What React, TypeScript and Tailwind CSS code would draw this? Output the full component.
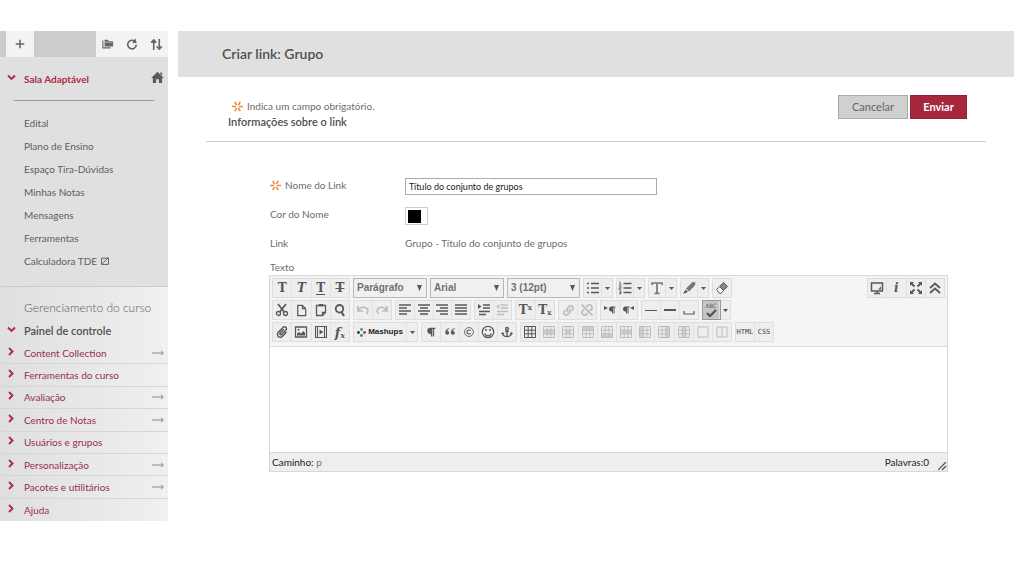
import type { ReactNode } from "react";
import {
  FaAnchor,
  FaLink,
  FaPaperclip,
  FaParagraph,
  FaUnlink,
} from "react-icons/fa";

const courseLinks = [
  "Edital",
  "Plano de Ensino",
  "Espaço Tira-Dúvidas",
  "Minhas Notas",
  "Mensagens",
  "Ferramentas",
  "Calculadora TDE",
];

const controlPanel: { label: string; arrow: boolean }[] = [
  { label: "Content Collection", arrow: true },
  { label: "Ferramentas do curso", arrow: false },
  { label: "Avaliação", arrow: true },
  { label: "Centro de Notas", arrow: true },
  { label: "Usuários e grupos", arrow: false },
  { label: "Personalização", arrow: true },
  { label: "Pacotes e utilitários", arrow: true },
  { label: "Ajuda", arrow: false },
];

function Icon({ children, size = 14 }: { children: ReactNode; size?: number }) {
  return (
    <svg
      width={size}
      height={size}
      viewBox="0 0 14 14"
      fill="none"
      stroke="currentColor"
      strokeWidth="1.3"
      aria-hidden="true"
    >
      {children}
    </svg>
  );
}

function Chevron({ down = false }: { down?: boolean }) {
  return (
    <svg className="mb-[3px]" width="9" height="9" viewBox="0 0 9 9" fill="none" stroke="#b02a45" strokeWidth="1.9" aria-hidden="true">
      <path d={down ? "M1 2.5 4.5 6 8 2.5" : "M3 1 6.5 4.5 3 8"} />
    </svg>
  );
}

function Asterisk() {
  return (
    <svg className="shrink-0" width="11" height="11" viewBox="0 0 11 11" stroke="#f0873f" strokeWidth="1.6" aria-hidden="true">
      <path d="M0 5.5H4M7 5.5H11M2.7 .8 4.7 4.2M8.3 .8 6.3 4.2M2.7 10.2 4.7 6.8M8.3 10.2 6.3 6.8" />
    </svg>
  );
}

function Group({ width, children }: { width: string; children: ReactNode }) {
  return (
    <div className={`flex h-5 shrink-0 divide-x divide-[#e2e2e2] border border-[#dedede] bg-[#eeeeee] ${width}`}>
      {children}
    </div>
  );
}

function Tool({
  label,
  children,
  dim = false,
  active = false,
}: {
  label: string;
  children: ReactNode;
  dim?: boolean;
  active?: boolean;
}) {
  return (
    <button
      type="button"
      aria-label={label}
      className={`flex min-w-0 flex-1 items-center justify-center ${dim ? "text-[#bdbdbd]" : "text-[#585858]"} ${active ? "bg-[#c6c6c6] outline outline-[#999999]" : ""}`}
    >
      {children}
    </button>
  );
}

function Caret({ label }: { label: string }) {
  return (
    <button type="button" aria-label={label} className="flex w-[10px] shrink-0 items-center justify-center">
      <svg width="5" height="3" viewBox="0 0 5 3" fill="#555555" aria-hidden="true">
        <path d="M0 0H5L2.5 3Z" />
      </svg>
    </button>
  );
}

function Picker({ label, value, width }: { label: string; value: string; width: string }) {
  return (
    <div className={`relative shrink-0 ${width}`}>
      <select
        aria-label={label}
        className="h-5 w-full appearance-none border border-[#b8b8b8] bg-[#f0f0f0] pl-[3px] font-['Liberation_Sans',Arial,sans-serif] text-[10px] font-bold text-[#707070]"
      >
        <option>{value}</option>
      </select>
      <svg className="pointer-events-none absolute top-[7px] right-[5px]" width="5" height="6" viewBox="0 0 5 6" fill="#555555" aria-hidden="true">
        <path d="M0 0H5L2.5 6Z" />
      </svg>
    </div>
  );
}

const glyph = "font-['DejaVu_Serif',serif] text-[12px] leading-none font-bold";

function Lines({ widths, right = false }: { widths: number[]; right?: boolean }) {
  return (
    <Icon>
      {widths.map((w, i) => (
        <path key={i} d={right ? `M${13 - w} ${2 + i * 3}H13` : `M1 ${2 + i * 3}h${w}`} strokeWidth="1.5" />
      ))}
    </Icon>
  );
}

function TableIcon({ shade }: { shade?: string }) {
  return (
    <Icon>
      <path d="M1.5 1.5h11v11h-11zM1.5 5.2h11M1.5 8.8h11M5.2 1.5v11M8.8 1.5v11" strokeWidth="1" />
      {shade && <path d={shade} fill="currentColor" fillOpacity=".6" stroke="none" />}
    </Icon>
  );
}

const tableTools = [
  { label: "Propriedades da linha", shade: "M1.5 4.5h11v5h-11z" },
  { label: "Propriedades da célula", shade: "M5 5h4v4h-4z" },
  { label: "Inserir linha acima", shade: "M1.5 1.5h11v4h-11z" },
  { label: "Inserir linha abaixo", shade: "M1.5 8.5h11v4h-11z" },
  { label: "Excluir linha", shade: "M1.5 5.5h11v3h-11z" },
  { label: "Inserir coluna antes", shade: "M1.5 1.5h4v11h-4z" },
  { label: "Inserir coluna depois", shade: "M8.5 1.5h4v11h-4z" },
  { label: "Excluir coluna", shade: "M5 1.5h4v11h-4z" },
];

function Sidebar() {
  return (
    <aside className="w-[168px] shrink-0 bg-[#e0e0e0] text-[10px] leading-4 text-[#5e5e5e]">
      <div className="flex h-[26px] justify-between bg-[#cccccc] pl-[6px] text-[#666666]">
        <button type="button" aria-label="Adicionar item" className="flex w-7 items-center justify-center bg-[#f3f3f3]">
          <Icon size={10}>
            <path d="M7 1v12M1 7h12" strokeWidth="2.2" />
          </Icon>
        </button>
        <div className="flex w-[72px] items-center justify-between bg-[#f3f3f3] pr-[5px] pl-[6px]">
          <button type="button" aria-label="Pastas">
            <Icon size={12}>
              <path d="M1 3v8.5h9" />
              <path d="M3 2h4l1 1.500h5v6.500h-10z" fill="currentColor" stroke="none" />
              <path d="M3 4.700h10" stroke="#f3f3f3" strokeWidth=".7" />
            </Icon>
          </button>
          <button type="button" aria-label="Atualizar">
            <Icon size={12}>
              <path d="M10.500 4A5 5 0 1 0 12 8" strokeWidth="1.900" />
              <path d="M7 5.500 12.500 6 11 .5Z" fill="currentColor" stroke="none" />
            </Icon>
          </button>
          <button type="button" aria-label="Reordenar">
            <Icon size={13}>
              <path d="M4 13V2M1.300 5 4 2 6.700 5M10 1v11M7.300 9 10 12 12.700 9" strokeWidth="1.700" />
            </Icon>
          </button>
        </div>
      </div>

      <div className="flex items-center px-1 pt-[14px] pl-[7px]">
        <Chevron down />
        <a href="#sala" className="ml-2 flex-1 font-bold text-[#ab2b43]">Sala Adaptável</a>
        <a href="#inicio" aria-label="Início" className="mb-[3px] text-[#5c5c5c]">
          <Icon size={13}>
            <path d="M7 .8 13.800 7.500H12V13H8.500V9H5.500V13H2V7.500H.2ZM10 1.500h2v3.500l-2-2z" fill="currentColor" stroke="none" />
          </Icon>
        </a>
      </div>
      <hr className="mt-[13px] mr-[14px] ml-[14px] border-[#999999]" />

      <nav aria-label="Menu do curso">
        <ul className="grid h-[186px] auto-rows-fr border-b border-[#cccccc] pt-[10px] pb-[13px] pl-6">
          {courseLinks.map((label) => (
            <li key={label} className="flex items-center">
              <a href="#curso" className="flex items-center gap-1">
                {label}
                {label === "Calculadora TDE" && (
                  <Icon size={8}>
                    <path d="M1 2h12v11h-12zM2 12 13 1" strokeWidth="1.700" />
                  </Icon>
                )}
              </a>
            </li>
          ))}
        </ul>
      </nav>

      <div className="bg-linear-to-r from-[#dfdfdf] to-[#f0f0f0]">
        <h2 className="pt-[13px] pl-6 text-[12px] font-light text-[#5c5c5c]">Gerenciamento do curso</h2>
        <div className="mt-[7px] flex items-center pl-[7px]">
          <Chevron down />
          <h3 className="ml-2 text-[11px] font-semibold text-[#505050]">Painel de controle</h3>
        </div>
        <ul className="mt-[3px] grid h-[179px] auto-rows-fr divide-y divide-[#d6d6d6] text-[#983048]">
          {controlPanel.map(({ label, arrow }) => (
            <li key={label} className="flex items-center pr-1 pl-[6px]">
              <Chevron />
              <a href="#painel" className="ml-[9px] flex-1">{label}</a>
              {arrow && (
                <svg width="12" height="6" viewBox="0 0 12 6" fill="none" stroke="#888888" aria-hidden="true">
                  <path d="M0 3H11M9 .8 11.300 3 9 5.200" />
                </svg>
              )}
            </li>
          ))}
        </ul>
      </div>
    </aside>
  );
}

function Toolbar() {
  return (
    <div className="flex justify-between border-b border-[#dddddd] bg-[#f5f5f5] px-[2px] pt-[2px] pb-1">
      <div className="flex flex-col gap-[2px]">
        <div className="flex gap-[3px]">
          <Group width="w-[78px]">
            <Tool label="Negrito"><span className={glyph}>T</span></Tool>
            <Tool label="Itálico"><span className={`${glyph} italic`}>T</span></Tool>
            <Tool label="Sublinhado"><span className={`${glyph} border-b border-[#505050]`}>T</span></Tool>
            <Tool label="Tachado"><span className={`${glyph} line-through`}>T</span></Tool>
          </Group>
          <Picker label="Formato" value="Parágrafo" width="w-[74px]" />
          <Picker label="Fonte" value="Arial" width="w-[74px]" />
          <Picker label="Tamanho" value="3 (12pt)" width="w-[73px]" />
          <Group width="w-[30px]">
            <Tool label="Lista com marcadores">
              <Icon><path d="M1 2.500h2M1 7h2M1 11.500h2M5 2.500h8M5 7h8M5 11.500h8" strokeWidth="1.600" /></Icon>
            </Tool>
            <Caret label="Opções de marcadores" />
          </Group>
          <Group width="w-[29px]">
            <Tool label="Lista numerada">
              <Icon>
                <path d="M5.500 2.500h8M5.500 7h8M5.500 11.500h8" strokeWidth="1.600" />
                <path d="M1 1h1.200v3M.8 4h2.800M1 5.700h2v1.300h-2v1.300h2.500M1 10h2v3h-2M1.300 11.500h1.700" strokeWidth=".8" />
              </Icon>
            </Tool>
            <Caret label="Opções de numeração" />
          </Group>
          <Group width="w-[29px]">
            <Tool label="Cor do texto">
              <Icon><path d="M2 4V2h10v2M7 2v10M4.500 12.300h5" strokeWidth="1.700" stroke="#777777" /></Icon>
            </Tool>
            <Caret label="Opções de cor" />
          </Group>
          <Group width="w-[29px]">
            <Tool label="Realce">
              <Icon>
                <path d="M4 7.500 9 2.500C10.500 1 12.500.8 13.200 1.500S13 4.500 11.500 6L7 10.500Z" fill="#777777" stroke="none" />
                <path d="M3.500 8.500 6 11 1 13Z" fill="currentColor" stroke="none" />
              </Icon>
            </Tool>
            <Caret label="Opções de realce" />
          </Group>
          <Group width="w-[20px]">
            <Tool label="Remover formatação">
              <Icon>
                <path d="M8.500 1.500 12.500 5.500 8.500 9.500 4.500 5.500Z" fill="#888888" strokeWidth="1" />
                <path d="M4.500 5.500 1.500 8.500 4.500 12.500H6L8.500 9.500" strokeWidth="1" />
              </Icon>
            </Tool>
          </Group>
        </div>

        <div className="flex gap-[3px]">
          <Group width="w-[78px]">
            <Tool label="Recortar">
              <Icon>
                <circle cx="3.500" cy="10.500" r="2" />
                <circle cx="10.500" cy="10.500" r="2" />
                <path d="M3 1 9.300 9M11 1 4.700 9" strokeWidth="1.700" />
              </Icon>
            </Tool>
            <Tool label="Copiar"><Icon size={13}><path d="M3 1.500h5l3.500 3.500v7.500h-8.500zM8 1.500v3.500h3.500" /></Icon></Tool>
            <Tool label="Colar">
              <Icon>
                <path d="M4.500 2.500h-2v10h6l3-3v-7h-2M8.500 12.500v-3h3" />
                <path d="M4.500 1h5v2.500h-5z" fill="currentColor" stroke="none" />
              </Icon>
            </Tool>
            <Tool label="Localizar">
              <Icon><circle cx="6.500" cy="5.800" r="3.800" strokeWidth="1.800" /><path d="M8 8.500 11 13" strokeWidth="2.200" /></Icon>
            </Tool>
          </Group>
          <Group width="w-[39px]">
            <Tool label="Desfazer" dim>
              <Icon><path d="M2 3v5h5M2.500 7.500C4 4.500 6 4 8.500 4.300c3.500.5 4.500 4 2 6.700" strokeWidth="1.700" /></Icon>
            </Tool>
            <Tool label="Refazer" dim>
              <Icon><path d="M12 3v5h-5M11.500 7.500C10 4.500 8 4 5.500 4.300c-3.500.5-4.500 4-2 6.700" strokeWidth="1.700" /></Icon>
            </Tool>
          </Group>
          <Group width="w-[76px]">
            <Tool label="Alinhar à esquerda"><Lines widths={[12, 8, 12, 8]} /></Tool>
            <Tool label="Centralizar">
              <Icon><path d="M1 2h12M3 5h8M1 8h12M3 11h8" strokeWidth="1.500" /></Icon>
            </Tool>
            <Tool label="Alinhar à direita"><Lines widths={[12, 8, 12, 8]} right /></Tool>
            <Tool label="Justificar"><Lines widths={[12, 12, 12, 12]} /></Tool>
          </Group>
          <Group width="w-[38px]">
            <Tool label="Aumentar recuo">
              <Icon><path d="M6 2h7M6 5h7M2 8.500h11M2 11.500h7" strokeWidth="1.500" /><path d="M1 1 4.500 3.500 1 6Z" fill="currentColor" stroke="none" /></Icon>
            </Tool>
            <Tool label="Diminuir recuo" dim>
              <Icon><path d="M6 2h7M6 5h7M2 8.500h11M2 11.500h7" strokeWidth="1.500" /><path d="M4.500 1 1 3.500 4.500 6Z" fill="currentColor" stroke="none" /></Icon>
            </Tool>
          </Group>
          <Group width="w-[40px]">
            <Tool label="Sobrescrito">
              <span className={`${glyph} flex`}>T<span className="text-[7px] leading-none">x</span></span>
            </Tool>
            <Tool label="Subscrito">
              <span className={`${glyph} flex items-end`}>T<span className="text-[7px] leading-none">x</span></span>
            </Tool>
          </Group>
          <Group width="w-[39px]">
            <Tool label="Inserir link" dim><FaLink size={11} /></Tool>
            <Tool label="Remover link" dim><FaUnlink size={12} /></Tool>
          </Group>
          <Group width="w-[38px]">
            <Tool label="Esquerda para direita">
              <svg width="4" height="4" viewBox="0 0 4 4" className="mb-1" fill="currentColor" aria-hidden="true"><path d="M0 0 4 2 0 4Z" /></svg>
              <FaParagraph size={8} />
            </Tool>
            <Tool label="Direita para esquerda">
              <FaParagraph size={8} />
              <svg width="4" height="4" viewBox="0 0 4 4" className="mb-1" fill="currentColor" aria-hidden="true"><path d="M4 0 0 2 4 4Z" /></svg>
            </Tool>
          </Group>
          <Group width="w-[58px]">
            <Tool label="Linha fina"><Icon><path d="M1 7.500h12" strokeWidth="1" /></Icon></Tool>
            <Tool label="Linha grossa"><Icon><path d="M1 7h12" strokeWidth="2" /></Icon></Tool>
            <Tool label="Espaço"><Icon><path d="M2 8v3h10v-3" strokeWidth="1.200" /></Icon></Tool>
          </Group>
          <Group width="w-[29px]">
            <Tool label="Verificar ortografia" active>
              <span className="flex flex-col items-center">
                <span className="font-['DejaVu_Sans_Mono',monospace] text-[6px] leading-[6px]">ABC</span>
                <svg width="11" height="9" viewBox="0 0 11 9" fill="none" stroke="currentColor" strokeWidth="2.400" aria-hidden="true">
                  <path d="M1 4 4 7 10 1" />
                </svg>
              </span>
            </Tool>
            <Caret label="Opções de ortografia" />
          </Group>
        </div>

        <div className="flex gap-[3px]">
          <Group width="w-[78px]">
            <Tool label="Anexar arquivo"><FaPaperclip size={12} /></Tool>
            <Tool label="Inserir imagem">
              <Icon>
                <path d="M1.500 2h11v10h-11z" />
                <path d="M3 10.500V8.500L5 7 7 8.500 9.500 6 11 8v2.500z" fill="currentColor" stroke="none" />
                <circle cx="4.500" cy="4.800" r="1" fill="currentColor" stroke="none" />
              </Icon>
            </Tool>
            <Tool label="Inserir vídeo">
              <Icon>
                <path d="M1.500 1.500h11v11h-11zM3.500 2v10M10.500 2v10" strokeWidth="1.100" />
                <path d="M5.500 4.500 9.500 7 5.500 9.500Z" fill="currentColor" stroke="none" />
              </Icon>
            </Tool>
            <Tool label="Editor de fórmulas">
              <span className="flex items-end font-['DejaVu_Serif',serif] text-[13px] leading-none font-bold italic">f<span className="text-[8px] leading-none">x</span></span>
            </Tool>
          </Group>
          <Group width="w-[65px]">
            <button type="button" className="flex flex-1 items-center justify-center gap-[2px] font-['Liberation_Sans',Arial,sans-serif] text-[8px] font-bold text-[#222222]">
              <svg width="9" height="9" viewBox="0 0 9 9" aria-hidden="true">
                <circle cx="4.500" cy="1.500" r="1.400" fill="#3a9c98" />
                <circle cx="7.500" cy="4.500" r="1.400" fill="#c0392b" />
                <circle cx="4.500" cy="7.500" r="1.400" fill="#2f8f5b" />
                <circle cx="1.500" cy="4.500" r="1.400" fill="#333333" />
              </svg>
              Mashups
            </button>
            <Caret label="Opções de mashups" />
          </Group>
          <Group width="w-[96px]">
            <Tool label="Parágrafo"><FaParagraph size={10} /></Tool>
            <Tool label="Citação">
              <Icon size={12}><path d="M6 2.500C3 3 1.500 5 1.500 8a2.300 2.300 0 1 0 2.300-2.300C4 4.500 5 3.800 6 3.500ZM12.500 2.500C9.500 3 8 5 8 8a2.300 2.300 0 1 0 2.300-2.300c.2-1.200 1.200-1.900 2.200-2.200Z" fill="currentColor" stroke="none" /></Icon>
            </Tool>
            <Tool label="Símbolo">
              <Icon size={12}><circle cx="7" cy="7" r="5.200" strokeWidth="1" /><path d="M9 5.500A2.400 2.400 0 1 0 9 8.500" /></Icon>
            </Tool>
            <Tool label="Emoticon">
              <Icon>
                <circle cx="7" cy="7" r="5.700" strokeWidth="1.200" />
                <path d="M3.800 8.300a3.300 3.300 0 0 0 6.400 0" strokeWidth="1.200" />
                <path d="M5 4v2M9 4v2" strokeWidth="1.500" />
              </Icon>
            </Tool>
            <Tool label="Âncora"><FaAnchor size={12} /></Tool>
          </Group>
          <Group width="w-[212px]">
            <Tool label="Inserir tabela"><TableIcon /></Tool>
            {tableTools.map(({ label, shade }) => (
              <Tool key={label} label={label} dim><TableIcon shade={shade} /></Tool>
            ))}
            <Tool label="Mesclar células" dim><Icon><path d="M2 2h10v10h-10z" strokeWidth="1" /></Icon></Tool>
            <Tool label="Dividir células" dim><Icon><path d="M2 2h10v10h-10zM7 2v10" strokeWidth="1" /></Icon></Tool>
          </Group>
          <Group width="w-[39px]">
            <button type="button" className="flex-1 font-['DejaVu_Sans_Mono',monospace] text-[7px] text-[#444444]">HTML</button>
            <button type="button" className="flex-1 font-['DejaVu_Sans_Mono',monospace] text-[7px] text-[#444444]">CSS</button>
          </Group>
        </div>
      </div>

      <Group width="w-[78px]">
        <Tool label="Pré-visualizar">
          <Icon><path d="M1.500 2h11v8h-11zM4 12.500h6M7 10v2.500" strokeWidth="1.500" /><path d="M8 8.500h3v-3z" fill="currentColor" stroke="none" /></Icon>
        </Tool>
        <Tool label="Ajuda"><span className="font-['DejaVu_Serif',serif] text-[12px] leading-none font-bold italic">i</span></Tool>
        <Tool label="Tela cheia">
          <Icon>
            <path d="M2 2 5.500 5.500M12 2 8.500 5.500M2 12 5.500 8.500M12 12 8.500 8.500" strokeWidth="1.900" />
            <path d="M1 1h4l-4 4zM13 1v4l-4-4zM1 13v-4l4 4zM13 13h-4l4-4z" fill="currentColor" stroke="none" />
          </Icon>
        </Tool>
        <Tool label="Recolher">
          <Icon><path d="M2 7 7 2.500 12 7M2 12 7 7.500 12 12" strokeWidth="1.800" /></Icon>
        </Tool>
      </Group>
    </div>
  );
}

export default function App() {
  return (
    <div className="flex min-h-screen items-start gap-[10px] bg-white pt-[31px] pr-[10px] font-[Lato,'Liberation_Sans',sans-serif] text-[10px] leading-4 text-[#6c6c6c]">
      <Sidebar />
      <main className="min-w-0 flex-1">
        <header className="flex h-[46px] items-center bg-[#e0e0e0] pl-11">
          <h1 className="text-[14px] font-semibold text-[#505050]">Criar link: Grupo</h1>
        </header>

        <form className="pr-7 pl-7" onSubmit={(e) => e.preventDefault()}>
          <div className="flex items-start justify-between border-b border-[#cccccc] pt-[18px] pr-[19px] pb-[11px] pl-[22px]">
            <div className="pt-[3px]">
              <p className="flex items-center gap-1 pl-1"><Asterisk />Indica um campo obrigatório.</p>
              <h2 className="text-[11px] font-semibold text-[#505050]">Informações sobre o link</h2>
            </div>
            <div className="flex gap-[2px] text-[11px]">
              <button type="button" className="h-6 w-[70px] border border-[#aaaaaa] bg-[#d0d0d0] text-[#666666]">Cancelar</button>
              <button type="submit" className="h-6 w-[57px] border border-[#95203a] bg-[#a6263c] font-bold text-white">Enviar</button>
            </div>
          </div>

          <div className="pt-9 pr-[38px] pl-[63px]">
            <div className="ml-px grid grid-cols-[135px_1fr] leading-[14px]">
              <label htmlFor="nome" className="flex h-[29px] items-start gap-1"><span className="pt-[2px]"><Asterisk /></span>Nome do Link</label>
              <input
                id="nome"
                type="text"
                defaultValue="Título do conjunto de grupos"
                className="h-[17px] w-[252px] border border-[#aaaaaa] pl-[3px] text-[9px] text-[#222222]"
              />
              <label htmlFor="cor" className="h-[29px]">Cor do Nome</label>
              <button id="cor" type="button" aria-label="Cor do Nome: preto" className="h-[18px] w-[23px] border border-[#cccccc] bg-white p-[2px]">
                <span className="block size-[13px] bg-black" />
              </button>
              <span className="h-[23px]">Link</span>
              <span>Grupo - Título do conjunto de grupos</span>
            </div>
            <label htmlFor="texto" className="ml-px block">Texto</label>

            <div className="border border-[#d9d9d9]">
              <Toolbar />
              <textarea id="texto" className="block h-[105px] w-full resize-none bg-white p-2 outline-none" />
              <div className="flex h-[19px] items-center border-t border-[#d9d9d9] bg-[#eeeeee] pl-[2px] text-[#222222]">
                <span className="flex-1">Caminho: <span className="text-[#777777]">p</span></span>
                <span className="mr-[9px]">Palavras:0</span>
                <svg className="self-end" width="9" height="9" viewBox="0 0 9 9" stroke="#555555" strokeWidth="1.200" aria-hidden="true">
                  <path d="M0 8 8 0M4 8 8 4" />
                </svg>
              </div>
            </div>
          </div>
        </form>
      </main>
    </div>
  );
}
